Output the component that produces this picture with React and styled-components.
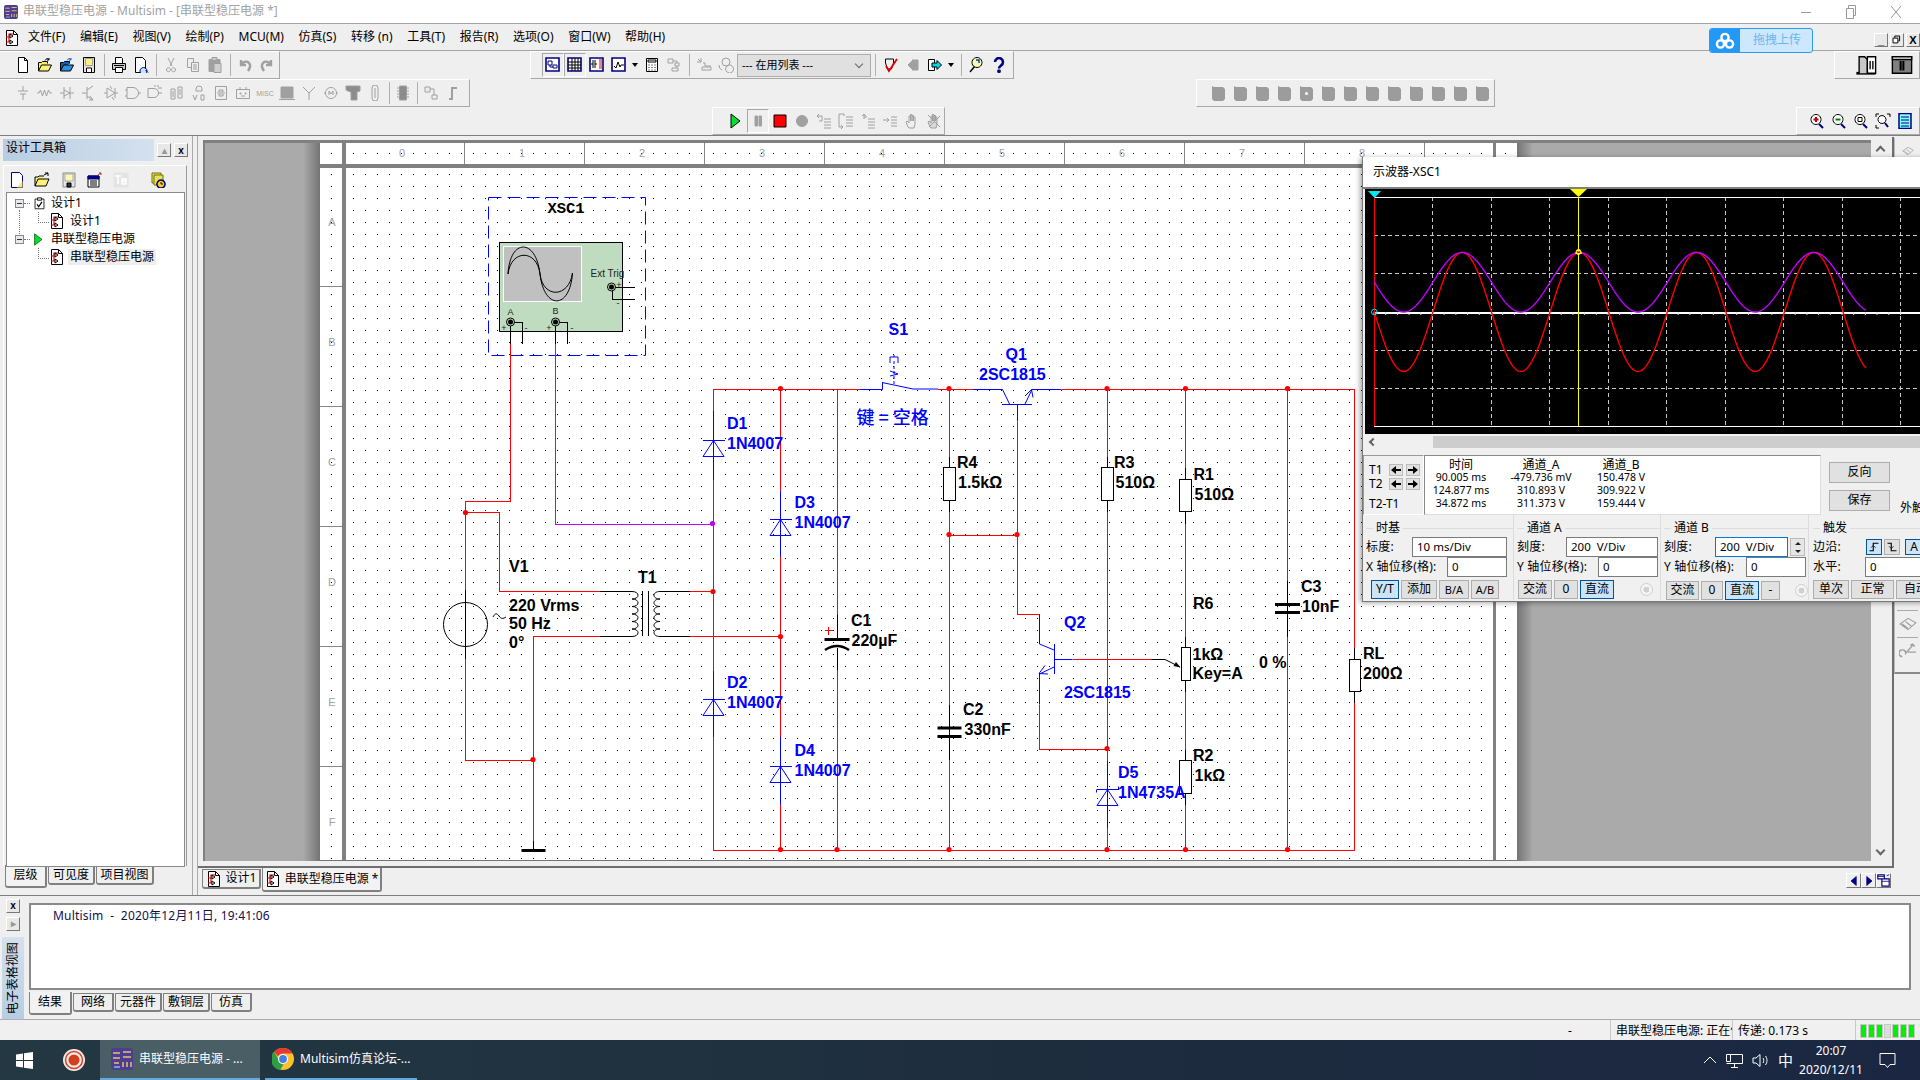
import React from "react"
import styled, { createGlobalStyle } from "styled-components"

const UI_FONT = '"Noto Sans", "Noto Sans CJK SC", sans-serif'

const Global = createGlobalStyle`
  html, body { margin: 0; padding: 0; background: #efefef; }
  * { box-sizing: border-box; }
`

const Root = styled.div`
  position: relative;
  width: 1920px;
  height: 1080px;
  overflow: hidden;
  display: flex;
  flex-direction: column;
  background: #efefef;
  color: #000;
  font: 12px/1.2 ${UI_FONT};
`

/* ---------- title + menu ---------- */
const TitleBar = styled.div`
  height: 24px;
  flex: none;
  display: flex;
  align-items: center;
  gap: 5px;
  padding-left: 4px;
  background: #fff;
  border-bottom: 1px solid #a4a4a4;
  color: #a2a2a2;
  white-space: pre;
`
const WinControls = styled.div`
  margin-left: auto;
  display: flex;
  color: #9a9a9a;
  margin-right: 2px;
`
const WinButton = styled.div`
  width: 45px;
  height: 22px;
  display: flex;
  align-items: center;
  justify-content: center;
`
const MenuBar = styled.div`
  height: 27px;
  flex: none;
  display: flex;
  align-items: center;
  padding: 1px 0 0 4px;
  border-bottom: 1px solid #a4a4a4;
`
const MenuItems = styled.div`
  display: flex;
  gap: 14.6px;
  margin-left: 8px;
  white-space: nowrap;
`
const MdiButtons = styled.div`
  margin-left: auto;
  margin-top: 5px;
  display: flex;
  gap: 2px;
`
const MdiButton = styled.div`
  width: 14px;
  height: 14px;
  display: flex;
  align-items: center;
  justify-content: center;
  background: #e8e8e8;
  border: 1px solid #fff;
  border-right-color: #777;
  border-bottom-color: #777;
  font: bold 11px/12px "Liberation Sans", sans-serif;
`
const UploadBadge = styled.div`
  position: absolute;
  left: 1709px;
  top: 28px;
  width: 104px;
  height: 25px;
  display: flex;
  align-items: center;
  background: #cde7fd;
  border: 1px solid #2a9bf5;
  border-radius: 3px;
  color: #6ab6ee;
  overflow: hidden;
`
const UploadLogo = styled.div`
  width: 30px;
  height: 100%;
  flex: none;
  display: flex;
  align-items: center;
  justify-content: center;
  background: #2299f6;
`
const UploadText = styled.span`
  margin-left: 13px;
`

/* ---------- toolbars ---------- */
const ToolArea = styled.div`
  height: 85px;
  flex: none;
  border-bottom: 1px solid #7e7e7e;
`
const ToolRow = styled.div`
  height: 28px;
  display: flex;
`
const Toolbar = styled.div`
  width: ${p => p.$w}px;
  margin-left: ${p => p.$ml || 0}px;
  padding-left: ${p => p.$pl || 0}px;
  height: 28px;
  display: flex;
  align-items: center;
  border-top: 1px solid #fff;
  border-right: 1px solid #a8a8a8;
  border-bottom: 1px solid #a8a8a8;
  border-left: ${p => (p.$ml || p.$edge ? "1px solid #fff" : "none")};
`
const ToolBtn = styled.div`
  width: ${p => p.$w || 22}px;
  height: 24px;
  flex: none;
  display: flex;
  align-items: center;
  justify-content: center;
  border: 1px solid ${p => (p.$on ? "#a8a8a8" : "transparent")};
  border-right-color: ${p => (p.$on ? "#fff" : "transparent")};
  border-bottom-color: ${p => (p.$on ? "#fff" : "transparent")};
`
const ToolSep = styled.div`
  width: ${p => p.$w || 8}px;
  height: 22px;
  flex: none;
  display: flex;
  justify-content: center;
  &::after {
    content: "";
    width: 1px;
    background: #b0b0b0;
  }
`
const DropCaret = styled.div`
  width: 0;
  height: 0;
  margin: 0 3px 0 2px;
  flex: none;
  border: 3px solid transparent;
  border-top: 4px solid #000;
  border-bottom: none;
`
const ListSelect = styled.div`
  width: 134px;
  height: 23px;
  flex: none;
  display: flex;
  align-items: center;
  justify-content: space-between;
  padding: 0 8px 0 4px;
  background: #e0e0e0;
  border: 1px solid #adadad;
  font-size: 11px;
`
const Chevron = styled.span`
  width: 6px;
  height: 6px;
  margin-top: -3px;
  border-right: 1px solid #666;
  border-bottom: 1px solid #666;
  transform: rotate(45deg);
`

/* ---------- body ---------- */
const Body = styled.div`
  height: 760px;
  flex: none;
  display: flex;
  border-bottom: 1px solid #7e7e7e;
`
const LeftPanel = styled.div`
  width: 193px;
  flex: none;
  margin-right: 4px;
  padding: 3px 0 0 3px;
  border-right: 1px solid #aaa;
`
const PanelHead = styled.div`
  height: 22px;
  display: flex;
  align-items: flex-start;
`
const PanelTitle = styled.div`
  width: 151px;
  height: 22px;
  padding: 2px 0 0 3px;
  background: linear-gradient(90deg, #b8cde2, #d4e1ef);
`
const SmallBtn = styled.div`
  width: 14px;
  height: 14px;
  margin: 4px 0 0 3px;
  display: flex;
  align-items: center;
  justify-content: center;
  background: #e8e8e8;
  border: 1px solid #fff;
  border-right-color: #777;
  border-bottom-color: #777;
  font: bold 10px "Liberation Sans", sans-serif;
  color: ${p => p.$c || "#000"};
`
const PanelBox = styled.div`
  width: 184px;
  height: 701px;
  margin-top: 4px;
  padding: 2px;
  border-top: 1px solid #fff;
  border-left: 1px solid #fff;
  border-right: 1px solid #9a9a9a;
`
const PanelTools = styled.div`
  height: 24px;
  display: flex;
  align-items: center;
`
const Tree = styled.div`
  position: relative;
  width: 179px;
  height: 675px;
  padding-top: 1px;
  background: #fff;
  border: 1px solid #8a8a8a;
  &::before {
    content: "";
    position: absolute;
    left: 12px;
    top: 17px;
    height: 34px;
    border-left: 1px dotted #777;
  }
`
const TreeRow = styled.div`
  position: relative;
  height: 18px;
  display: flex;
  align-items: center;
  padding-left: ${p => (p.$child ? 42 : 8)}px;
  gap: 5px;
  white-space: nowrap;
  ${p =>
    p.$child &&
    `&::before {
      content: "";
      position: absolute;
      left: 31px;
      top: 0;
      width: 10px;
      height: 10px;
      border-left: 1px dotted #777;
      border-bottom: 1px dotted #777;
    }`}
`
const Expander = styled.div`
  position: relative;
  width: 9px;
  height: 9px;
  margin-right: 4px;
  flex: none;
  display: flex;
  align-items: center;
  justify-content: center;
  background: #e8e8ee;
  border: 1px solid #888;
  &::before {
    content: "";
    width: 5px;
    height: 1px;
    background: #333;
  }
  &::after {
    content: "";
    position: absolute;
    left: 8px;
    top: 3px;
    width: 6px;
    border-top: 1px dotted #777;
  }
`
const TreeText = styled.span`
  padding: 1px ${p => (p.$sel ? 2 : 0)}px;
  margin-left: ${p => (p.$sel ? -2 : 0)}px;
  background: ${p => (p.$sel ? "#eeeeee" : "transparent")};
`
const TabRow = styled.div`
  height: ${p => p.$h || 20}px;
  display: flex;
  align-items: flex-start;
  gap: ${p => p.$gap || 2}px;
  margin-left: ${p => p.$ml || 0}px;
  margin-top: ${p => p.$mt || 0}px;
`
const Tab = styled.div`
  width: ${p => p.$w}px;
  height: ${p => (p.$active ? (p.$th || 19) + 4 : p.$th || 19)}px;
  margin-top: ${p => (p.$active ? -1 : 0)}px;
  display: flex;
  align-items: center;
  justify-content: center;
  gap: 4px;
  white-space: pre;
  border: 1px solid #808080;
  border-top: ${p => (p.$active ? "none" : "1px solid #808080")};
  border-right-width: 2px;
  border-bottom-width: 2px;
  border-radius: 0 0 3px 3px;
  background: ${p => (p.$active ? "#f2f2f2" : "#efefef")};
`

const Center = styled.div`
  width: 1697px;
  flex: none;
  border-left: 1px solid #aaa;
`
const Frame = styled.div`
  height: 731px;
  margin-top: 1px;
  padding: 3px 3px 5px 5px;
  display: flex;
  border-right: 2px solid #6e6e6e;
  border-bottom: 2px solid #6e6e6e;
`
const Canvas = styled.div`
  flex: 1;
  min-width: 0;
  display: flex;
  overflow: hidden;
  border-top: 3px solid #808080;
  border-left: 2px solid #808080;
  background: linear-gradient(
    90deg,
    #aaa 0,
    #aaa 98px,
    #747474 115px,
    #747474 1312px,
    #aaa 1328px
  );
`
const Sheet = styled.svg`
  flex: none;
  margin-left: 115px;
  background: #fff;
  display: block;
`
const VScroll = styled.div`
  width: 18px;
  flex: none;
  display: flex;
  flex-direction: column;
  justify-content: space-between;
  align-items: center;
  padding: 4px 0;
  background: #efefef;
  color: #666;
  font: bold 12px "Liberation Sans", sans-serif;
`
const VArrow = styled.span`
  width: 7px;
  height: 7px;
  margin: 3px 0;
  border-left: 2px solid #666;
  border-top: 2px solid #666;
  transform: rotate(${p => (p.$down ? 225 : 45)}deg);
`
const NavButtons = styled.div`
  margin: 4px 3px 0 auto;
  display: flex;
`
const NavBtn = styled.div`
  width: 15px;
  height: 15px;
  display: flex;
  align-items: center;
  justify-content: center;
  background: #efefef;
  border: 1px solid #fff;
  border-right-color: #777;
  border-bottom-color: #777;
`
const Strip = styled.div`
  width: 26px;
  flex: none;
`
const StripTop = styled.div`
  height: 26px;
  margin-top: 2px;
  display: flex;
  justify-content: center;
  align-items: center;
  border-left: 1px solid #bbb;
`
const StripBox = styled.div`
  margin-top: 438px;
  height: 72px;
  display: flex;
  flex-direction: column;
  align-items: center;
  padding-top: 4px;
  border-bottom: 2px solid #8a8a8a;
  border-left: 1px solid #bbb;
`
const StripRule = styled.div`
  width: 21px;
  height: 1px;
  margin: 4px 0;
  background: #aaa;
`

/* ---------- bottom panel ---------- */
const Bottom = styled.div`
  height: 124px;
  flex: none;
  display: flex;
  border-bottom: 1px solid #aaa;
`
const SideRail = styled.div`
  width: 29px;
  flex: none;
  padding: 3px 0 0 2px;
  display: flex;
  flex-direction: column;
`
const RailBtn = styled(SmallBtn)`
  margin: 0 0 4px 4px;
`
const RailTitle = styled.div`
  width: 22px;
  height: 83px;
  margin-top: 2px;
  display: flex;
  align-items: center;
  justify-content: center;
  background: linear-gradient(0deg, #d4e1ef, #b8cde2);
  writing-mode: vertical-rl;
  text-orientation: sideways;
  transform: rotate(180deg);
  white-space: nowrap;
`
const ResultArea = styled.div`
  flex: 1;
`
const ResultBox = styled.div`
  width: 1882px;
  height: 87px;
  margin-top: 7px;
  padding: 4px 0 0 22px;
  background: #fff;
  border: 2px solid #8a8a8a;
  white-space: pre;
  color: #10104a;
  letter-spacing: 0.2px;
`
const StatusBar = styled.div`
  height: 20px;
  flex: none;
  display: flex;
  justify-content: flex-end;
  align-items: stretch;
  background: #f0f0f0;
`
const StatusCell = styled.div`
  width: ${p => p.$w}px;
  display: flex;
  align-items: center;
  justify-content: ${p => (p.$center ? "center" : "flex-start")};
  padding: 2px 0 0 ${p => (p.$center ? 0 : 5)}px;
  overflow: hidden;
  white-space: pre;
  border-left: ${p => (p.$center ? "none" : "1px solid #c8c8c8")};
`
const Meter = styled.div`
  display: flex;
  gap: 3px;
`
const MeterBar = styled.div`
  width: 5px;
  height: 12px;
  background: ${p => (p.$off ? "#dcdcdc" : "#00f000")};
  outline: 1px solid #c8c8c8;
`

/* ---------- taskbar ---------- */
const Taskbar = styled.div`
  height: 40px;
  flex: none;
  display: flex;
  align-items: stretch;
  background: linear-gradient(90deg, #233842, #1d2c3e 60%, #1b2742);
  color: #fff;
`
const TaskIcon = styled.div`
  width: ${p => p.$w}px;
  flex: none;
  display: flex;
  align-items: center;
  justify-content: center;
`
const TaskItem = styled.div`
  width: ${p => p.$w}px;
  margin-right: ${p => p.$mr || 0}px;
  flex: none;
  display: flex;
  align-items: center;
  gap: 6px;
  padding-left: ${p => p.$pl}px;
  background: ${p => (p.$on ? "#4a5e66" : "transparent")};
  border-bottom: 2px solid #63a9dc;
  white-space: nowrap;
`
const Tray = styled.div`
  margin-left: auto;
  display: flex;
  align-items: center;
  gap: 9px;
`
const ImeText = styled.span`
  font-size: 15px;
`
const Clock = styled.div`
  width: 74px;
  margin-left: -8px;
  text-align: center;
  line-height: 19px;
`
const Notice = styled.div`
  width: 38px;
  margin-right: 14px;
  display: flex;
  justify-content: center;
`

/* ---------- oscilloscope window ---------- */
const Scope = styled.div`
  position: absolute;
  left: 1362px;
  top: 157px;
  width: 570px;
  height: 445px;
  overflow: hidden;
  background: #f0f0f0;
  border-left: 1px solid #777;
  border-bottom: 1px solid #777;
  box-shadow: -2px 1px 5px rgba(0, 0, 0, 0.35);
`
const ScopeTitle = styled.div`
  height: 32px;
  padding: 8px 0 0 10px;
  background: #fff;
  border-bottom: 2px solid #808080;
`
const ScopeScreen = styled.svg`
  display: block;
  margin-left: 2px;
  background: #000;
`
const HScroll = styled.div`
  height: 15px;
  margin-top: 2px;
  display: flex;
  align-items: center;
  padding-left: 4px;
  background: linear-gradient(90deg, #f0f0f0 70px, #cdcdcd 70px);
  background-size: 100% 12px;
  background-repeat: no-repeat;
  background-position: top;
`
const HArrow = styled.span`
  width: 6px;
  height: 6px;
  margin: -3px 0 0 3px;
  border-left: 2px solid #666;
  border-bottom: 2px solid #666;
  transform: rotate(45deg);
`
const ReadRow = styled.div`
  height: 60px;
  margin-top: 4px;
  display: flex;
`
const CursorBox = styled.div`
  width: 61px;
  flex: none;
  padding: 7px 0 0 5px;
  border: 1px solid #9a9a9a;
  border-right-color: #fff;
  border-bottom-color: #fff;
`
const CursorRow = styled.div`
  height: 14px;
  display: flex;
  align-items: center;
`
const CursorTail = styled.div`
  margin-top: 6px;
`
const CursorName = styled.span`
  width: 20px;
`
const ArrowBtn = styled.div`
  width: 14px;
  height: 12px;
  margin-right: 3px;
  display: flex;
  align-items: center;
  justify-content: center;
  background: #e1e1e1;
  border: 1px solid #bbb;
`
const Readout = styled.div`
  width: 397px;
  flex: none;
  display: grid;
  grid-template-columns: 72px 88px 72px;
  grid-auto-rows: 13px;
  align-content: start;
  justify-items: center;
  padding-top: 2px;
  background: #fff;
  border: 1px solid #8a8a8a;
  border-right-color: #ddd;
  border-bottom-color: #ddd;
  font-size: 10.5px;
  line-height: 13px;
  white-space: pre;
`
const ReadHead = styled.span`
  font-size: 12px;
  line-height: 13px;
`
const SideCol = styled.div`
  margin-left: 8px;
  padding-top: 7px;
  width: 61px;
  flex: none;
  display: flex;
  flex-direction: column;
  gap: 7px;
`
const ExtLabel = styled.span`
  margin: 46px 0 0 10px;
  white-space: nowrap;
`
const Groups = styled.div`
  display: flex;
`
const Group = styled.div`
  width: ${p => p.$w}px;
  flex: none;
  padding: 5px 0 0 ${p => p.$pl || 3}px;
  border-left: ${p => (p.$first ? "none" : "1px solid #dcdcdc")};
`
const Legend = styled.div`
  height: 16px;
  margin-bottom: 1px;
  padding-left: 7px;
  line-height: 16px;
  background: linear-gradient(#dcdcdc, #dcdcdc) center / 100% 1px no-repeat;
`
const LegendText = styled.span`
  padding: 0 3px;
  background: #f0f0f0;
`
const Field = styled.div`
  height: 20px;
  display: flex;
  align-items: center;
  white-space: pre;
`
const FieldLabel = styled.span`
  width: ${p => p.$w}px;
  flex: none;
  letter-spacing: 0.2px;
`
const Input = styled.div`
  width: ${p => p.$w}px;
  height: 20px;
  flex: none;
  padding: 0 0 0 4px;
  background: #fff;
  border: 1px solid ${p => (p.$focus ? "#0078d7" : "#7a7a7a")};
  line-height: 18px;
  white-space: pre;
  font-size: 11.5px;
`
const Spinner = styled.div`
  width: 15px;
  height: 18px;
  margin-left: 2px;
  display: flex;
  flex-direction: column;
  align-items: center;
  justify-content: space-around;
  background: #e6e6e6;
  border: 1px solid #bbb;
`
const SpinTri = styled.span`
  width: 0;
  height: 0;
  border: 3px solid transparent;
  ${p => (p.$down ? "border-top: 3px solid #222; border-bottom: none;" : "border-bottom: 3px solid #222; border-top: none;")}
`
const BtnRow = styled.div`
  display: flex;
  gap: 2px;
  align-items: center;
  padding-left: ${p => p.$pl || 0}px;
  margin-top: ${p => p.$mt || 3}px;
`
const Btn = styled.div`
  width: ${p => p.$w}px;
  height: ${p => p.$h || 19}px;
  margin-left: ${p => p.$ml || 0}px;
  flex: none;
  display: flex;
  align-items: center;
  justify-content: center;
  background: ${p => (p.$on ? "#cce4f7" : "#e1e1e1")};
  border: 1px solid ${p => (p.$on ? "#005499" : "#adadad")};
  white-space: nowrap;
  font-size: ${p => p.$fs || 12}px;
`
const Radio = styled.div`
  width: 13px;
  height: 13px;
  margin-left: ${p => p.$ml}px;
  flex: none;
  border-radius: 50%;
  background: radial-gradient(circle, #d0d0d0 0 3px, #f4f4f4 3px);
  border: 1px solid #cfcfcf;
`

/* ---------- schematic text ---------- */
const PartText = styled.text`
  font: bold 16px "Liberation Sans", sans-serif;
  fill: ${p => p.$c || "#000"};
`
const KeyText = styled.text`
  font: 500 18px "Noto Sans CJK SC", sans-serif;
  fill: #0000ff;
`
const RulerText = styled.text`
  font: 11px "Liberation Sans", sans-serif;
  fill: #a0a0a0;
  text-anchor: middle;
`
const SmallText = styled.text`
  font: ${p => p.$s || 9}px "Liberation Sans", sans-serif;
  fill: ${p => p.$c || "#222"};
  text-anchor: ${p => p.$a || "start"};
`
const InstrText = styled.text`
  font: bold 15.5px "Liberation Mono", monospace;
  fill: #000;
  text-anchor: middle;
`

/* ---------- icons ---------- */
const G = "#a0a0a0"
const N = "#000080"
const K = "#000"

const ICONS = {
  new: [["M3.5 .5h6l3 3v12h-9z", "#fff", K], ["M9.5 .5v3h3", "none", K]],
  open: [["M1.5 14V5.5h3l1-1h5v2", "#ffe95c", K], ["M1.5 14l3-6h10l-3 6z", "#fff27a", K], ["M8 3.5c1-2 3-2.5 4-1M12 1v2h-2", "none", K]],
  openBlue: [["M1.5 14V5.5h3l1-1h5v2", "#0d5fb4", K], ["M1.5 14l3-6h10l-3 6z", "#2f8fe0", K], ["M8 3.5c1-2 3-2.5 4-1M12 1v2h-2", "none", "#1060c0"]],
  save: [["M2.5 .5h11v15h-11z", "#e4e4e4", K], ["M4.5 1.5h7v7h-7z", "#fff27a", G], ["M5.5 11h5v4.5h-5z", "#fff", K]],
  print: [["M4.5 .5h6l1 1v5h-7z", "#fff", K], ["M1.5 6.5h13v6h-13z", "#c8c8c8", K], ["M4.5 10.5h7v5h-7z", "#fff", K], ["M3 8.5h10", "none", K]],
  preview: [["M2.5 .5h7l3 3v12h-10z", "#fff", K], ["M10.5 10.5a3.5 3.5 0 1 1-.01 0z", "#bfe6ff", N], ["M12.5 13l2.5 2.5", "none", N]],
  cut: [["M5 1l4 8M11 1l-4 8M6.5 11a2 2 0 1 1-3 2 2 2 0 0 1 3-2zM12.5 13a2 2 0 1 1-3-2 2 2 0 0 1 3 2z", "none", G]],
  copy: [["M2.5 1.5h6v9h-6z", "#efefef", G], ["M6.5 5.5h7v9h-7z", "#efefef", G], ["M8 8h4M8 10h4M8 12h4", "none", G]],
  paste: [["M2 2.5h11v12h-11z", G, G], ["M5 .5h5v3h-5z", "#c8c8c8", G], ["M7 6.5h7v9h-7z", "#d0d0d0", G]],
  undo: [["M4 3v5h5M4 8c3-5 8-4 9 0 .5 2-.5 4-2 6", "none", G, 2.4]],
  redo: [["M12 3v5H7M12 8C9 3 4 4 3 8c-.5 2 .5 4 2 6", "none", G, 2.4]],

  srcG: [["M8 1v5M3 6h10M5 9h6M8 9v6", "none", G]],
  resG: [["M0 8h2l1.5-3 2 6 2-6 2 6 2-6 1.5 3h2", "none", G]],
  capG: [["M5 2v12M11 2v12M1 8h4M11 8h4M5 5l6 3-6 3", "none", G]],
  bjtG: [["M6 2v12M1 8h5M6 5l6-4M6 11l6 4M9 11l3 4-4 0", "none", G]],
  diodeG: [["M1 8h3M12 8h3M4 3v10l8-5zM12 3v10M7 1l2 3M9 12l2 3", "none", G]],
  gateA: [["M2 2.5h6a5.5 5.5 0 0 1 0 11H2zM0 5h2M0 11h2M13.5 8H16", "none", G]],
  gateB: [["M1 3.5h6a4.5 4.5 0 0 1 0 9H1zM7 1h2M10 1h2M11 3h4M11.5 8H15", "none", G]],
  adcG: [["M2 4h4v10H2zM9 2h4v11H9zM4 6v6M11 4v6", "none", G]],
  ovG: [["M8 1a3 3 0 0 1 3 3v2H5V4a3 3 0 0 1 3-3zM2 10l2 5 2-5M10 10h3v5h-3z", "none", G]],
  chipG: [["M2.5 1.5h11v13h-11zM6 5h4v2H6zM6 9h4v2H6zM5 7v2M11 7v2", "none", G]],
  robotG: [["M1.5 4.5h13v9h-13zM5 2v2M11 2v2", "none", G], ["M5 8h1v1H5zM10 8h1v1h-1zM6 11h4", "none", G]],
  blockG: [["M2 2h12v11H2z", G, G], ["M0 14.5h16", "none", G]],
  antG: [["M2 2l6 6 6-6M8 8v7", "none", G]],
  motorG: [["M8 2.5a5.5 5.5 0 1 1-.01 0zM1 8h1.5M13.5 8H15M6 10V6l2 3 2-3v4", "none", G]],
  tG: [["M1 1h14v5l-3 1v8H6V7L3 6 1 5z", "#8c8c8c", G]],
  ovalG: [["M5 3a3 3 0 0 1 6 0v10a3 3 0 0 1-6 0zM8 3v10", "none", G]],
  mcuG: [["M4.5 1h7v14h-7z", "#8c8c8c", G], ["M2 3h3M2 6h3M2 9h3M2 12h3M11 3h3M11 6h3M11 9h3M11 12h3", "none", G]],
  busG: [["M2 2h5v5H2zM9 10h5v4H9zM7 4h4v6", "none", G]],
  stepG: [["M4 14h3V3h5", "none", G, 2]],

  boxA: [["M1 1h13v13H1z", "#fff", N, 1.6], ["M3 4h4v4H3zM8 8h4v3H8zM5 8v2h3", "none", N]],
  boxB: [["M1 1h13v13H1z", "#fff", N, 1.6], ["M1 5h13M1 8h13M1 11h13M5 1v13M8 1v13M11 1v13", "none", K]],
  boxC: [["M1 1h13v13H1z", "#fff", N, 1.6], ["M4 3v8M6 3v8M2 7h2M6 7h2", "none", K], ["M10 3h3M10 5h3M10 7h3M10 9h3M10 11h3", "none", "#e00000"]],
  boxD: [["M1 1h13v13H1z", "#fff", N, 1.6], ["M3 9l2 2 2-6 2 5 1-2h3", "none", K]],
  calc: [["M2.5 1.5h11v13h-11z", "#fff", K], ["M4 3h8v2H4z", "none", K], ["M4.5 8h1M7.5 8h1M10.5 8h1M4.5 10.5h1M7.5 10.5h1M10.5 10.5h1M4.5 13h1M7.5 13h1M10.5 13h1", "none", K]],
  netG: [["M2 2h5v4H2zM9 6h4v3H9zM6 11h6v3H6zM7 4h4v2M11 9v2", "none", G]],
  pinG: [["M2 2l3 3M5 1v4M1 5h4M7 6h2v3H15M6 10h9v3H6z", "none", G]],
  globeG: [["M4 5a4 4 0 1 1 8 0 4 4 0 0 1-8 0zM1 8a5 5 0 0 0 3 5M9 9a4 4 0 1 1 0 6 4 4 0 0 1 0-6z", "none", G]],
  check: [["M2.5 2h8v4l-2 6h-4l-2-6z", "none", K], ["M3 9l3 5 8-12", "none", "#e00000", 1.8]],
  backG: [["M3 8l4-4v8zM7 3h6v10H7", G, G]],
  forward: [["M1.5 2.5h6v11h-6z", "#fff", K], ["M5 6h5V3.5l4.5 4.5-4.5 4.5V10H5z", "#00d8e8", K]],
  search: [["M8 .5a5 5 0 1 1-.01 0z", "#fff8b0", K], ["M5.5 9.5L1 15", "none", K, 1.5], ["M7 3h3v3", "none", "#0040c0", 1.5]],
  helpQ: [["M4 5a4 4 0 1 1 6 3.5C8.5 9.5 8 10 8 11.5", "none", N, 2.6], ["M6.8 13h2.4v2.4H6.8z", N, N]],
  play: [["M3 1v14l9-7z", "#00e030", K]],
  pause: [["M5 3h2.5v10H5zM9 3h2.5v10H9z", G, G]],
  stop: [["M2 2h12v12H2z", "#ff0000", K]],
  record: [["M8 2.5a5.5 5.5 0 1 1-.01 0z", G, G]],
  stepA: [["M1 3h5M1 3l2-2M1 3l2 2M6 3v5H3M8 6h7M8 9h7M8 12h7M8 15h7", "none", G]],
  stepB: [["M1 1h5v2M1 1v13h4M5 14l-2-2M5 14l-2 2M8 4h7M8 7h7M8 10h7M8 13h7", "none", G]],
  stepC: [["M4 6V1M4 1L2 3M4 1l2 2M4 4h3M8 6h7M8 9h7M8 12h7M8 15h7", "none", G]],
  stepD: [["M1 7h6M7 7L5 5M7 7L5 9M9 4h6M9 7h6M9 10h6M9 13h6", "none", G]],
  hand: [["M4 14L2 9l1-1 2 2V3h1.5v5V1.5H8V8V2.5h1.5V8V4H11v7l-1 4H5z", "#efefef", G]],
  handX: [["M4 14L2 9l1-1 2 2V3h1.5v5V1.5H8V8V2.5h1.5V8V4H11v7l-1 4H5z", "#d8d8d8", G], ["M2 2l12 12M3 14L14 3", "none", G]],
  zoomIn: [["M7 1.5a5 5 0 1 1-.01 0z", "#fff", K], ["M10 11l4 4", "none", N, 2], ["M4.5 6.5h5M7 4v5", "none", "#c00000", 2]],
  zoomOut: [["M7 1.5a5 5 0 1 1-.01 0z", "#fff", K], ["M10 11l4 4", "none", N, 2], ["M4.5 6.5h5", "none", "#008000", 2]],
  zoomArea: [["M7 1.5a5 5 0 1 1-.01 0z", "#fff", K], ["M10 11l4 4", "none", N, 2], ["M5 4.5h4v4H5z", "none", K]],
  zoomFit: [["M7 2.5a4 4 0 1 1-.01 0z", "#fff", K], ["M10 10l3 4", "none", N, 2], ["M1 4V1h3M12 1h3v3M1 12v3h3", "none", K]],
  sheet: [["M2 .5h12v15H2z", "#80ffff", N, 1.5], ["M4 4h8M4 7h8M4 10h8M4 13h8", "none", N]],

  stem: [["M1 14h14", "none", K, 2], ["M3 14V2h4l2 2v10", "#c8c8c8", K], ["M9 2h6v12H9z", "#fff", K], ["M11 5v6M13 5v6", "none", K]],
  stemB: [["M1 2h14v12H1z", "#808080", K], ["M1 2h14v2H1z", "#fff", K], ["M7 5v7M9 5v7", "none", K, 1.5]],

  lNew: [["M2.5 .5h8l3 3v12h-11z", "#fff", N], ["M13.5 9L8 15.5h5.5z", "#ffe95c", "none"]],
  lOpen: [["M1 14l3-7h11l-3 7zM1 14V5h3l1-1h5", "#fff27a", K], ["M10 3l4-2M14 1h-3M14 1v3", "none", K]],
  lSave: [["M2 1h12v14H2z", "#e4e4e4", "#8a8a8a"], ["M4 2h8v7H4z", "#fff8b0", "#aaa"], ["M6 11h4v4H6z", "#333", K]],
  lWin: [["M1 4h11v11H1z", "#fff", K], ["M1 4h11v3H1z", N, N], ["M3 9h7M3 11h7M3 13h7", "none", K], ["M11 3l3-2M14 1h-2M14 1v2", "none", "#c03020"]],
  lTe: [["M1 1h14v14H1z", "#e4e4e4", "#e4e4e4"], ["M2 4h6M5 4v8M9 9h4M9 7h4v5H9z", "none", "#fff", 1.5]],
  lClock: [["M1 1h9v10H1z", "#e8e060", "#707000"], ["M3 3h9v10H3z", "#e8e060", "#707000"], ["M10 8a4 4 0 1 1-.01 0z", "#ffd000", N, 1.5], ["M10 10v2h2", "none", N]],
  doc: [["M2.5 .5h7l4 4v11h-11z", "#fff", K], ["M9.5 .5v4h4", "none", K], ["M2 7h3v-3h4M5 7v5h4M2 12h3", "none", "#e00000", 1.2], ["M6 4l3 2-3 2zM6 10l3 2-3 2z", "#fff", K]],
  clip: [["M2.5 2.5h11v12h-11z", "#fff", K], ["M5.5 1h5v3h-5z", "#e4e4e4", K], ["M5 9l2 3 4-6", "none", K, 1.5]],
  design: [["M2 1v14l9-7z", "#00e030", "#006000"]],
  stripA: [["M1 8l7-5 7 4-7 6zM3 8l5 4M6 6l5 4", "none", G]],
  stripB: [["M3 13a3 3 0 1 1 3-3l6-7M8 9h7M10 3l2-1 2 2", "none", G, 1.3]],
  navL: [["M11 2v12L4 8z", N, N]],
  navR: [["M5 2v12l7-6z", N, N]],
  navW: [["M1 1h8v5H1zM6 6h9v9H6z", "#fff", N, 1.4], ["M1 3h8M6 9h9M12 2l3-1", "none", N]],
  edgeUp: [["M2 13h5V3h7", "none", K, 1.5], ["M4 9l3-3 3 3", "none", K]],
  edgeDown: [["M2 3h5v10h7", "none", K, 1.5], ["M4 7l3 3 3-3", "none", K]],
  restore: [["M1.5 4.5h7v7h-7z", "#fff", K, 1.4], ["M4 4V1.5h7v7H9", "none", K, 1.4]],
}

const Ico = ({ name, size = 16 }) => (
  <svg width={size} height={size} viewBox="0 0 16 16">
    {ICONS[name].map(([d, fill, stroke, sw], i) => (
      <path key={i} d={d} fill={fill} stroke={stroke} strokeWidth={sw || 1} />
    ))}
  </svg>
)
const Tool = ({ name, w, on }) => (
  <ToolBtn $w={w} $on={on}>
    <Ico name={name} />
  </ToolBtn>
)
const MiscTool = () => (
  <ToolBtn>
    <svg width="18" height="16" viewBox="0 0 18 16">
      <SmallText x="9" y="11" $s={7} $c={G} $a="middle">MISC</SmallText>
    </svg>
  </ToolBtn>
)

/* ---------- schematic data, in page pixels ---------- */
const RED = "#ff0000"
const BLUE = "#0000ff"
const PURPLE = "#c000ff"

const redWires = [
  "510.5,344 510.5,501.5 465.5,501.5 465.5,590",
  "465.5,512.5 499.5,512.5 499.5,591.5 600,591.5",
  "465.5,659 465.5,760.5 533.5,760.5",
  "533.5,841 533.5,636.5 600,636.5",
  "690,591.5 713.5,591.5",
  "690,636.5 780.5,636.5",
  "713.5,410.5 713.5,389.5 860,389.5",
  "713.5,480 713.5,670.5",
  "713.5,736.5 713.5,850.5 1354.5,850.5 1354.5,703",
  "780.5,389.5 780.5,490.5",
  "780.5,556.5 780.5,736.5",
  "780.5,805 780.5,850.5",
  "837.5,389.5 837.5,615",
  "837.5,670 837.5,850.5",
  "938,389.5 973.5,389.5",
  "1061.5,389.5 1354.5,389.5 1354.5,647.5",
  "949.5,389.5 949.5,456.5",
  "949.5,511.5 949.5,704.5",
  "949.5,760 949.5,850.5",
  "949.5,535.5 1017.5,535.5",
  "1017.5,421.5 1017.5,614.5 1039.5,614.5",
  "1039.5,704.5 1039.5,749.5 1107.5,749.5",
  "1072.5,659.5 1151.5,659.5",
  "1107.5,389.5 1107.5,456.5",
  "1107.5,511.5 1107.5,760.5",
  "1107.5,827.5 1107.5,850.5",
  "1185.5,389.5 1185.5,467.5",
  "1185.5,523.5 1185.5,636.5",
  "1185.5,691.5 1185.5,749.5",
  "1185.5,804.5 1185.5,850.5",
  "1287.5,389.5 1287.5,580.5",
  "1287.5,636.5 1287.5,850.5",
]
const blackWires = [
  "465.5,590 465.5,659",
  "600,591.5 632,591.5",
  "600,636.5 632,636.5",
  "660,591.5 690,591.5",
  "660,636.5 690,636.5",
  "533.5,841 533.5,850",
  "837.5,615 837.5,640",
  "837.5,648 837.5,670",
  "949.5,704.5 949.5,760",
  "1287.5,580.5 1287.5,636.5",
]
const junctions = [
  [465.5, 512.5], [533, 759.5], [713, 591.5], [780.5, 636.5], [780.5, 388.5],
  [949, 388.5], [1107, 388.5], [1185.5, 388.5], [1287.5, 388.5], [949, 534.5],
  [1017, 534.5], [1107, 748.5], [780.5, 849.5], [837, 849.5], [949, 849.5],
  [1107, 849.5], [1185.5, 849.5], [1287.5, 849.5],
]
const diodes = [
  { x: 713.5, bar: 440.5, top: 410.5, end: 480 },
  { x: 713.5, bar: 699.5, top: 670.5, end: 736.5 },
  { x: 780.5, bar: 519.5, top: 490.5, end: 556.5 },
  { x: 780.5, bar: 766.5, top: 736.5, end: 805 },
  { x: 1107.5, bar: 789.5, top: 760.5, end: 827.5, zener: true },
]
const resistors = [
  { x: 949.5, top: 456.5, a: 467.5, b: 500.5, end: 511.5, hw: 6 },
  { x: 1107.5, top: 456.5, a: 467.5, b: 500.5, end: 511.5, hw: 6 },
  { x: 1185.5, top: 467.5, a: 479.5, b: 511.5, end: 523.5, hw: 6 },
  { x: 1185.5, top: 636.5, a: 647.5, b: 680.5, end: 691.5, hw: 4.5 },
  { x: 1185.5, top: 749.5, a: 760.5, b: 793.5, end: 804.5, hw: 6 },
  { x: 1354.5, top: 647.5, a: 659.5, b: 691.5, end: 703, hw: 5.5 },
]
const labels = [
  ["D1", 727, 429, BLUE], ["1N4007", 727, 449, BLUE],
  ["D3", 794.5, 507.5, BLUE], ["1N4007", 794.5, 527.5, BLUE],
  ["D2", 727, 688, BLUE], ["1N4007", 727, 708, BLUE],
  ["D4", 794.5, 755.5, BLUE], ["1N4007", 794.5, 775.5, BLUE],
  ["D5", 1118, 778, BLUE], ["1N4735A", 1118, 798, BLUE],
  ["S1", 888.5, 335, BLUE], ["Q1", 1005.5, 360, BLUE], ["2SC1815", 979, 379.5, BLUE],
  ["Q2", 1064, 627.5, BLUE], ["2SC1815", 1064, 697.5, BLUE],
  ["V1", 509, 571.5], ["T1", 638, 583], ["220 Vrms", 509, 610.5], ["50 Hz", 509, 629], ["0°", 509, 648],
  ["C1", 851, 625.5], ["220µF", 851.5, 646],
  ["R4", 957, 468], ["1.5kΩ", 958, 488],
  ["R3", 1114, 468], ["510Ω", 1115.5, 488],
  ["R1", 1193.5, 480], ["510Ω", 1194.5, 499.5],
  ["R6", 1193, 609], ["1kΩ", 1192.5, 660], ["Key=A", 1192.5, 678.5], ["0 %", 1259, 668],
  ["C3", 1301, 591.5], ["10nF", 1302, 611.5],
  ["C2", 963, 715], ["330nF", 964.5, 735],
  ["R2", 1193, 760.5], ["1kΩ", 1194.5, 780.5],
  ["RL", 1363, 659], ["200Ω", 1363, 679],
]
const rulerCols = [0, 1, 2, 3, 4, 5, 6, 7, 8]
const rulerRows = ["A", "B", "C", "D", "E", "F"]

const coil = (x, dir) => {
  let d = `M${x} 591.5`
  for (let i = 0; i < 6; i++) d += `c${8 * dir} 0 ${8 * dir} 7.5 0 7.5`
  return d
}

const Dots = ({ id, x, y }) => (
  <pattern id={id} x={x} y={y} width="12" height="12" patternUnits="userSpaceOnUse">
    <rect width="1" height="1" fill="#000" />
  </pattern>
)

const Schematic = () => (
  <Sheet width="1197" height="717" viewBox="320 143 1197 717">
    <defs>
      <Dots id="dMain" x="353" y="174" />
      <Dots id="dTop" x="353" y="153" />
      <Dots id="dLeft" x="331" y="174" />
    </defs>
    <rect x="346" y="168" width="1171" height="692" fill="url(#dMain)" />
    <rect x="346" y="143" width="1171" height="21" fill="url(#dTop)" />
    <rect x="320" y="168" width="22" height="692" fill="url(#dLeft)" />
    <rect x="331" y="153" width="1" height="1" fill="#000" />

    <g shapeRendering="crispEdges">
      <rect x="320" y="164" width="1197" height="4" fill="#808080" />
      <rect x="342" y="143" width="4" height="717" fill="#808080" />
      <rect x="1493" y="143" width="3" height="717" fill="#808080" />
      {rulerCols.map(c => (
        <line key={c} x1={464.5 + c * 120} x2={464.5 + c * 120} y1="143" y2="164" stroke="#888" />
      ))}
      {rulerRows.map((r, i) => (
        <line key={r} x1="320" x2="342" y1={286.5 + i * 120} y2={286.5 + i * 120} stroke="#888" />
      ))}
    </g>
    {rulerCols.map(c => (
      <RulerText key={c} x={402 + c * 120} y="157">{c}</RulerText>
    ))}
    {rulerRows.map((r, i) => (
      <RulerText key={r} x="332" y={226 + i * 120}>{r}</RulerText>
    ))}

    {/* XSC1 */}
    <rect x="488.5" y="197.5" width="157" height="158" fill="none" stroke={BLUE} strokeDasharray="13 6" />
    <InstrText x="566" y="213">XSC1</InstrText>
    <rect x="499.5" y="242.5" width="123" height="89" fill="#c0dcc0" stroke="#000" />
    <rect x="503.5" y="246.5" width="78" height="55" fill="#c0c0c0" stroke="#fff" />
    <path d="M508 274C510 238 536 238 540 274S570 310 572.5 273" fill="none" stroke="#000" />
    <path d="M508 274C511 249 537 249 540 274S569 298 572.5 273" fill="none" stroke="#000" />
    <SmallText x="590.5" y="277" $s={10}>Ext Trig</SmallText>
    <SmallText x="510.5" y="315" $s={9} $a="middle">A</SmallText>
    <SmallText x="555.5" y="314" $s={9} $a="middle">B</SmallText>
    <SmallText x="504" y="331" $a="middle">+</SmallText>
    <SmallText x="526" y="331" $a="middle">-</SmallText>
    <SmallText x="549" y="331" $a="middle">+</SmallText>
    <SmallText x="572" y="331" $a="middle">-</SmallText>
    <SmallText x="619" y="288" $a="middle">+</SmallText>
    <SmallText x="618" y="306" $a="middle">-</SmallText>
    <g fill="none" stroke="#000" shapeRendering="crispEdges">
      <polyline points="510.5,322.5 522.5,322.5 522.5,344" />
      <polyline points="555.5,322.5 567.5,322.5 567.5,344" />
      <line x1="510.5" x2="510.5" y1="322" y2="344" />
      <line x1="555.5" x2="555.5" y1="322" y2="344" />
      <polyline points="635,287.5 612.5,287.5 612.5,299.5 635,299.5" />
    </g>
    {[[510.5, 322], [555.5, 322], [611.5, 287]].map(([x, y]) => (
      <g key={x}>
        <circle cx={x} cy={y} r="4" fill="#c0dcc0" stroke="#000" />
        <circle cx={x} cy={y} r="2.5" fill="#000" />
      </g>
    ))}

    {/* wires */}
    <g fill="none" shapeRendering="crispEdges">
      {redWires.map(p => <polyline key={p} points={p} stroke={RED} />)}
      <polyline points="555.5,344 555.5,524.5 712,524.5" stroke={PURPLE} />
      {blackWires.map(p => <polyline key={p} points={p} stroke="#000" />)}
    </g>
    <polyline points="1151.5,659.5 1165,659.5 1180,667" fill="none" stroke="#000" />
    <path d="M1180.5 667.5l-7-1.5 2.5-4z" fill="#000" />

    {junctions.map(([x, y]) => (
      <circle key={`${x}-${y}`} cx={x} cy={y} r="2.6" fill={RED} />
    ))}
    <circle cx="712.5" cy="523.5" r="2.6" fill={PURPLE} />

    {/* source, ground, transformer */}
    <circle cx="465.5" cy="624.5" r="22" fill="none" stroke="#000" />
    <path d="M493 617c2-4 4-4 6-1s4 3 7 1" fill="none" stroke="#000" />
    <rect x="521.5" y="849" width="24" height="3" fill="#000" />
    <path d={coil(632, 1)} fill="none" stroke="#000" />
    <path d={coil(660, -1)} fill="none" stroke="#000" />
    <path d="M642.5 591v45M648.5 591v45" stroke="#000" shapeRendering="crispEdges" />

    {/* caps */}
    <path d="M824.5 639.5h25" stroke="#000" strokeWidth="3" />
    <path d="M825 650Q837 642 849 650" fill="none" stroke="#000" strokeWidth="2.6" />
    <path d="M825 630.5h7.5M828.7 627v7.5" stroke={RED} shapeRendering="crispEdges" />
    <path d="M937.5 728h24M937.5 736.5h24M1275 604.5h25M1275 612.5h25" stroke="#000" strokeWidth="3" />

    {/* resistors */}
    {resistors.map(r => (
      <g key={`${r.x}-${r.a}`} shapeRendering="crispEdges">
        <path d={`M${r.x} ${r.top}V${r.a}M${r.x} ${r.b}V${r.end}`} stroke="#000" />
        <rect x={r.x - r.hw} y={r.a} width={r.hw * 2} height={r.b - r.a} fill="#fff" stroke="#000" />
      </g>
    ))}

    {/* diodes */}
    {diodes.map(d => (
      <g key={d.bar} fill="none" stroke={BLUE}>
        <path d={`M${d.x} ${d.top}V${d.end}`} shapeRendering="crispEdges" />
        <path d={`M${d.x - 11} ${d.bar}h22`} shapeRendering="crispEdges" />
        {d.zener && <path d={`M${d.x - 11} ${d.bar}v3M${d.x + 11} ${d.bar}v-3`} />}
        <path d={`M${d.x} ${d.bar}L${d.x - 10.5} ${d.bar + 16}H${d.x + 10.5}z`} />
      </g>
    ))}

    {/* S1, Q1, Q2 */}
    <g fill="none" stroke={BLUE}>
      <path d="M860 389.5h22.5v-7M882 382.5l31 6.5h25" />
      <path d="M894 384v-25" strokeDasharray="3 2" />
      <path d="M890 363v-6h8v6M894 357v-2" />
      <path d="M890 371l8 3-8 2" />
      <path d="M973.5 389.5h29l7 14.5M1002 404.5h30M1025 404l7-14.5h29.5" />
      <path d="M1025 396l6.5-6.5 1.5 8" />
      <path d="M1017.5 404.5v17" />
      <path d="M1039.5 614.5v29.5l14.5 6M1054.5 644v30M1054.5 659.5h18M1054 667l-14.5 7v30.5" />
      <path d="M1045 665.5l-6 8 9 .5" />
    </g>

    <KeyText x="856.5" y="424">键 = 空格</KeyText>
    {labels.map(([t, x, y, c]) => (
      <PartText key={`${t}-${x}-${y}`} x={x} y={y} $c={c}>{t}</PartText>
    ))}
  </Sheet>
)

/* ---------- scope trace ---------- */
const GX = [1432.5, 1491.5, 1549.5, 1608.5, 1666.5, 1725.5, 1783.5, 1842.5, 1900.5]
const GY = [236.5, 274.5, 351.5, 389.5]
const trace = (mid, amp) => {
  const pts = []
  for (let x = 1374; x <= 1866; x += 1) {
    pts.push(`${x},${(mid + amp * Math.sin((2 * Math.PI * (x - 1374.3)) / 117.2)).toFixed(1)}`)
  }
  return pts.join(" ")
}
const ScopeGraph = () => (
  <ScopeScreen width="566" height="245" viewBox="1365 190 566 245">
    <g stroke="#c8c8c8" strokeDasharray="4 3" shapeRendering="crispEdges">
      {GX.map(x => <line key={x} x1={x} x2={x} y1="198" y2="427" />)}
      {GY.map(y => <line key={y} x1="1374" x2="1931" y1={y} y2={y} />)}
    </g>
    <g stroke="#fff" shapeRendering="crispEdges">
      <line x1="1374" x2="1931" y1="198.5" y2="198.5" />
      <line x1="1374" x2="1931" y1="427.5" y2="427.5" />
      <line x1="1374" x2="1931" y1="313.5" y2="313.5" strokeWidth="2" />
    </g>
    {Array.from({ length: 46 }, (_, i) => (
      <line key={i} x1={1374 + i * 11.7} x2={1374 + i * 11.7} y1="313" y2="316" stroke="#ddd" />
    ))}
    <line x1="1374.5" x2="1374.5" y1="198" y2="427" stroke="#ff0000" />
    <line x1="1578.5" x2="1578.5" y1="198" y2="427" stroke="#ffff00" />
    <polyline points={trace(313, 59.5)} fill="none" stroke="#ff0000" strokeWidth="1.4" />
    <polyline points={trace(283.2, 29.8)} fill="none" stroke="#c000ff" strokeWidth="1.4" />
    <path d="M1368 192h13l-6.5 7z" fill="#00e8f0" />
    <path d="M1570 190h17l-8.5 8z" fill="#ffff00" />
    <circle cx="1374.3" cy="313" r="2.8" fill="none" stroke="#00e8f0" />
    <path d="M1578.5 250l3 4.5h-6z" fill="none" stroke="#ffff00" />
    <circle cx="1578.5" cy="253" r="2.5" fill="none" stroke="#ffff00" />
  </ScopeScreen>
)
const ArrowGlyph = ({ right }) => (
  <svg width="10" height="8" viewBox="0 0 10 8">
    <path d={right ? "M0 3h5V0l5 4-5 4V5H0z" : "M10 3H5V0L0 4l5 4V5h5z"} fill="#000" />
  </svg>
)

const readings = [
  ["90.005 ms", "-479.736 mV", "150.478 V"],
  ["124.877 ms", "310.893 V", "309.922 V"],
  ["34.872 ms", "311.373 V", "159.444 V"],
]

const ScopeWindow = () => (
  <Scope>
    <ScopeTitle>示波器-XSC1</ScopeTitle>
    <ScopeGraph />
    <HScroll><HArrow /></HScroll>
    <ReadRow>
      <CursorBox>
        <CursorRow>
          <CursorName>T1</CursorName>
          <ArrowBtn><ArrowGlyph /></ArrowBtn>
          <ArrowBtn><ArrowGlyph right /></ArrowBtn>
        </CursorRow>
        <CursorRow>
          <CursorName>T2</CursorName>
          <ArrowBtn><ArrowGlyph /></ArrowBtn>
          <ArrowBtn><ArrowGlyph right /></ArrowBtn>
        </CursorRow>
        <CursorTail>T2-T1</CursorTail>
      </CursorBox>
      <Readout>
        <ReadHead>时间</ReadHead>
        <ReadHead>通道_A</ReadHead>
        <ReadHead>通道_B</ReadHead>
        {readings.flat().map((v, i) => <span key={i}>{v}</span>)}
      </Readout>
      <SideCol>
        <Btn $w={61} $h={21}>反向</Btn>
        <Btn $w={61} $h={21}>保存</Btn>
      </SideCol>
      <ExtLabel>外触发</ExtLabel>
    </ReadRow>
    <Groups>
      <Group $w={150} $first>
        <Legend><LegendText>时基</LegendText></Legend>
        <Field><FieldLabel $w={46}>标度:</FieldLabel><Input $w={95}>10 ms/Div</Input></Field>
        <Field><FieldLabel $w={81}>X 轴位移(格):</FieldLabel><Input $w={60}>0</Input></Field>
        <BtnRow $pl={5}>
          <Btn $w={28} $on>Y/T</Btn>
          <Btn $w={36}>添加</Btn>
          <Btn $w={30} $fs={11}>B/A</Btn>
          <Btn $w={28} $fs={11}>A/B</Btn>
        </BtnRow>
      </Group>
      <Group $w={147}>
        <Legend><LegendText>通道 A</LegendText></Legend>
        <Field><FieldLabel $w={49}>刻度:</FieldLabel><Input $w={92}>200  V/Div</Input></Field>
        <Field><FieldLabel $w={81}>Y 轴位移(格):</FieldLabel><Input $w={60}>0</Input></Field>
        <BtnRow $pl={1}>
          <Btn $w={34}>交流</Btn>
          <Btn $w={24}>0</Btn>
          <Btn $w={34} $on>直流</Btn>
          <Radio $ml={24} />
        </BtnRow>
      </Group>
      <Group $w={148}>
        <Legend><LegendText>通道 B</LegendText></Legend>
        <Field><FieldLabel $w={51}>刻度:</FieldLabel><Input $w={73} $focus>200  V/Div</Input><Spinner><SpinTri /><SpinTri $down /></Spinner></Field>
        <Field><FieldLabel $w={82}>Y 轴位移(格):</FieldLabel><Input $w={60}>0</Input></Field>
        <BtnRow $pl={2} $mt={4}>
          <Btn $w={33}>交流</Btn>
          <Btn $w={22}>0</Btn>
          <Btn $w={34} $on>直流</Btn>
          <Btn $w={19}>-</Btn>
          <Radio $ml={13} />
        </BtnRow>
      </Group>
      <Group $w={120} $pl={4}>
        <Legend><LegendText>触发</LegendText></Legend>
        <Field>
          <FieldLabel $w={53}>边沿:</FieldLabel>
          <Btn $w={16} $h={16} $on><Ico name="edgeUp" size={12} /></Btn>
          <Btn $w={16} $h={16} $ml={2}><Ico name="edgeDown" size={12} /></Btn>
          <Btn $w={18} $h={16} $ml={5} $on>A</Btn>
        </Field>
        <Field><FieldLabel $w={52}>水平:</FieldLabel><Input $w={80}>0</Input></Field>
        <BtnRow>
          <Btn $w={36}>单次</Btn>
          <Btn $w={43}>正常</Btn>
          <Btn $w={40}>自动</Btn>
        </BtnRow>
      </Group>
    </Groups>
  </Scope>
)

const WinLogo = () => (
  <svg width="17" height="17" viewBox="0 0 17 17">
    <path d="M0 2.5l7-1v6.5H0zM8 1.3l9-1.3v8H8zM0 9h7v6.5l-7-1zM8 9h9v8l-9-1.3z" fill="#fff" />
  </svg>
)
const RecordLogo = () => (
  <svg width="24" height="24" viewBox="0 0 24 24">
    <circle cx="12" cy="12" r="11" fill="#f4ebe6" />
    <circle cx="12" cy="12" r="8.5" fill="none" stroke="#d2452a" strokeWidth="1.5" />
    <circle cx="12" cy="12" r="5.5" fill="#d2401f" />
  </svg>
)
const MultisimLogo = ({ size = 22 }) => (
  <svg width={size} height={size} viewBox="0 0 22 22">
    <rect width="22" height="22" rx="3" fill="#4c3f8f" />
    <path d="M2 5h7M2 10h7M3 15h5M12 4h8M12 9h8M12 14v5M16 14v5M20 14v5" stroke="#e8c070" strokeWidth="1.5" fill="none" />
    <path d="M3 19h6" stroke="#8ab8e8" strokeWidth="1.5" />
  </svg>
)
const ChromeLogo = () => (
  <svg width="22" height="22" viewBox="0 0 22 22">
    <circle cx="11" cy="11" r="11" fill="#fbc02d" />
    <path d="M11 0a11 11 0 0 1 9.5 5.5H11a5.5 5.5 0 0 0-5 3L2 3.5A11 11 0 0 1 11 0z" fill="#e53935" />
    <path d="M2 3.5l4.5 8a5.5 5.5 0 0 0 5 5L8 22A11 11 0 0 1 2 3.5z" fill="#2e9e44" />
    <circle cx="11" cy="11" r="5" fill="#fff" />
    <circle cx="11" cy="11" r="3.9" fill="#3f7fe8" />
  </svg>
)

export default function App() {
  return (
    <Root>
      <Global />
      <TitleBar>
        <MultisimLogo size={14} />
        <span>串联型稳压电源 - Multisim - [串联型稳压电源 *]</span>
        <WinControls>
          <WinButton>
            <svg width="12" height="12" viewBox="0 0 12 12"><path d="M1 6.5h10" stroke="#9a9a9a" /></svg>
          </WinButton>
          <WinButton>
            <svg width="12" height="14" viewBox="0 0 12 14"><path d="M1.5 3.5h7v10h-7zM3.5 3V.5h7v10H9" fill="none" stroke="#9a9a9a" /></svg>
          </WinButton>
          <WinButton>
            <svg width="12" height="14" viewBox="0 0 12 14"><path d="M1 1l10 12M11 1L1 13" stroke="#9a9a9a" /></svg>
          </WinButton>
        </WinControls>
      </TitleBar>

      <MenuBar>
        <Ico name="doc" />
        <MenuItems>
          {["文件(F)", "编辑(E)", "视图(V)", "绘制(P)", "MCU(M)", "仿真(S)", "转移 (n)", "工具(T)", "报告(R)", "选项(O)", "窗口(W)", "帮助(H)"].map(m => (
            <span key={m}>{m}</span>
          ))}
        </MenuItems>
        <MdiButtons>
          <MdiButton>_</MdiButton>
          <MdiButton><Ico name="restore" size={11} /></MdiButton>
          <MdiButton>X</MdiButton>
        </MdiButtons>
      </MenuBar>
      <UploadBadge>
        <UploadLogo>
          <svg width="20" height="20" viewBox="0 0 20 20" fill="none" stroke="#fff" strokeWidth="2.4">
            <circle cx="10" cy="6.5" r="3.6" />
            <circle cx="5.5" cy="13" r="3.6" />
            <circle cx="14.5" cy="13" r="3.6" />
          </svg>
        </UploadLogo>
        <UploadText>拖拽上传</UploadText>
      </UploadBadge>

      <ToolArea>
        <ToolRow>
          <Toolbar $w={280} $pl={12}>
            <Tool name="new" /><Tool name="open" /><Tool name="openBlue" /><Tool name="save" />
            <ToolSep />
            <Tool name="print" /><Tool name="preview" />
            <ToolSep />
            <Tool name="cut" /><Tool name="copy" /><Tool name="paste" />
            <ToolSep />
            <Tool name="undo" /><Tool name="redo" />
          </Toolbar>
          <Toolbar $w={484} $ml={250} $pl={11}>
            <Tool name="boxA" on /><Tool name="boxB" on /><Tool name="boxC" /><Tool name="boxD" />
            <DropCaret />
            <Tool name="calc" /><Tool name="netG" />
            <ToolSep $w={8} />
            <Tool name="pinG" /><Tool name="globeG" />
            <ListSelect>--- 在用列表 ---<Chevron /></ListSelect>
            <ToolSep $w={9} />
            <Tool name="check" /><Tool name="backG" /><Tool name="forward" />
            <DropCaret />
            <ToolSep $w={9} />
            <Tool name="search" /><Tool name="helpQ" w={22} />
          </Toolbar>
          <Toolbar $w={86} $ml={820} $pl={13} $edge>
            <ToolBtn $w={36}><Ico name="stem" size={22} /></ToolBtn>
            <ToolBtn $w={36}><Ico name="stemB" size={22} /></ToolBtn>
          </Toolbar>
        </ToolRow>
        <ToolRow>
          <Toolbar $w={470} $pl={12}>
            {["srcG", "resG", "capG", "bjtG", "diodeG", "gateA", "gateB", "adcG", "ovG", "chipG", "robotG"].map(n => <Tool key={n} name={n} />)}
            <MiscTool />
            {["blockG", "antG", "motorG", "tG", "ovalG"].map(n => <Tool key={n} name={n} />)}
            <ToolSep $w={6} />
            <Tool name="mcuG" />
            <ToolSep $w={6} />
            <Tool name="busG" /><Tool name="stepG" />
          </Toolbar>
          <Toolbar $w={299} $ml={726} $pl={10}>
            {Array.from({ length: 13 }, (_, i) => (
              <ToolBtn key={i}>
                <svg width="15" height="18" viewBox="0 0 15 18">
                  <path d="M1 2l2 1h9l2 2v10l-2 2H3l-2-2z" fill="#9c9c9c" />
                  {i === 4 && <circle cx="7.5" cy="9.5" r="1.5" fill="#fff" />}
                </svg>
              </ToolBtn>
            ))}
          </Toolbar>
        </ToolRow>
        <ToolRow>
          <Toolbar $w={233} $ml={712} $pl={12}>
            <Tool name="play" /><Tool name="pause" on /><Tool name="stop" /><Tool name="record" />
            <Tool name="stepA" /><Tool name="stepB" /><Tool name="stepC" /><Tool name="stepD" />
            <Tool name="hand" /><Tool name="handX" />
          </Toolbar>
          <Toolbar $w={124} $ml={851} $pl={9}>
            <Tool name="zoomIn" /><Tool name="zoomOut" /><Tool name="zoomArea" /><Tool name="zoomFit" /><Tool name="sheet" />
          </Toolbar>
        </ToolRow>
      </ToolArea>

      <Body>
        <LeftPanel>
          <PanelHead>
            <PanelTitle>设计工具箱</PanelTitle>
            <SmallBtn $c="#999">▴</SmallBtn>
            <SmallBtn>x</SmallBtn>
          </PanelHead>
          <PanelBox>
            <PanelTools>
              <ToolBtn><Ico name="lNew" /></ToolBtn>
              <ToolBtn $w={28}><Ico name="lOpen" /></ToolBtn>
              <ToolBtn $w={26}><Ico name="lSave" /></ToolBtn>
              <ToolBtn $w={26}><Ico name="lWin" /></ToolBtn>
              <ToolBtn $w={26}><Ico name="lTe" /></ToolBtn>
              <ToolBtn $w={50}><Ico name="lClock" /></ToolBtn>
            </PanelTools>
            <Tree>
              <TreeRow><Expander /><Ico name="clip" size={13} /><TreeText>设计1</TreeText></TreeRow>
              <TreeRow $child><Ico name="doc" /><TreeText>设计1</TreeText></TreeRow>
              <TreeRow><Expander /><Ico name="design" size={13} /><TreeText>串联型稳压电源</TreeText></TreeRow>
              <TreeRow $child><Ico name="doc" /><TreeText $sel>串联型稳压电源</TreeText></TreeRow>
            </Tree>
          </PanelBox>
          <TabRow $gap={1} $ml={2}>
            <Tab $w={42} $active>层级</Tab>
            <Tab $w={47}>可见度</Tab>
            <Tab $w={58}>项目视图</Tab>
          </TabRow>
        </LeftPanel>

        <Center>
          <Frame>
            <Canvas><Schematic /></Canvas>
            <VScroll><VArrow /><VArrow $down /></VScroll>
          </Frame>
          <TabRow $h={22} $gap={1} $ml={4} $mt={1}>
            <Tab $w={59} $th={20}><Ico name="doc" />设计1</Tab>
            <Tab $w={120} $th={20} $active><Ico name="doc" />串联型稳压电源 *</Tab>
            <NavButtons>
              <NavBtn><Ico name="navL" size={12} /></NavBtn>
              <NavBtn><Ico name="navR" size={12} /></NavBtn>
              <NavBtn><Ico name="navW" size={13} /></NavBtn>
            </NavButtons>
          </TabRow>
        </Center>

        <Strip>
          <StripTop><Ico name="stripA" size={12} /></StripTop>
          <StripBox>
            <StripRule />
            <Ico name="stripA" size={18} />
            <StripRule />
            <Ico name="stripB" size={18} />
          </StripBox>
        </Strip>
      </Body>

      <Bottom>
        <SideRail>
          <RailBtn>x</RailBtn>
          <RailBtn $c="#999">▸</RailBtn>
          <RailTitle>电子表格视图</RailTitle>
        </SideRail>
        <ResultArea>
          <ResultBox>{"Multisim  -  2020年12月11日, 19:41:06"}</ResultBox>
          <TabRow $gap={1} $mt={3}>
            <Tab $w={43} $active>结果</Tab>
            <Tab $w={41}>网络</Tab>
            <Tab $w={47}>元器件</Tab>
            <Tab $w={47}>敷铜层</Tab>
            <Tab $w={41}>仿真</Tab>
          </TabRow>
        </ResultArea>
      </Bottom>

      <StatusBar>
        <StatusCell $w={80} $center>-</StatusCell>
        <StatusCell $w={122}>串联型稳压电源: 正在仿真</StatusCell>
        <StatusCell $w={123}>传递: 0.173 s</StatusCell>
        <StatusCell $w={65}>
          <Meter>
            {[0, 0, 0, 1, 0, 0, 0].map((off, i) => <MeterBar key={i} $off={off} />)}
          </Meter>
        </StatusCell>
      </StatusBar>

      <Taskbar>
        <TaskIcon $w={48}><WinLogo /></TaskIcon>
        <TaskIcon $w={52}><RecordLogo /></TaskIcon>
        <TaskItem $w={160} $pl={11} $on $mr={5}><MultisimLogo />串联型稳压电源 - ...</TaskItem>
        <TaskItem $w={152} $pl={7}><ChromeLogo />Multisim仿真论坛-...</TaskItem>
        <Tray>
          <svg width="14" height="8" viewBox="0 0 14 8"><path d="M1 7l6-6 6 6" fill="none" stroke="#fff" /></svg>
          <svg width="17" height="15" viewBox="0 0 17 15"><path d="M.5 1.5h4v7h-4zM4.5 1.5h12v9h-16M8.5 10.5v3.5M5 14.5h7" fill="none" stroke="#fff" /></svg>
          <svg width="17" height="15" viewBox="0 0 17 15"><path d="M1 5h3l4-3.5v12L4 10H1zM11 5c1 1.5 1 3.5 0 5M13.5 3c2 3 2 6 0 9" fill="none" stroke="#fff" /></svg>
          <ImeText>中</ImeText>
          <Clock>20:07<br />2020/12/11</Clock>
        </Tray>
        <Notice>
          <svg width="17" height="40" viewBox="0 0 17 40"><path d="M1 13.5h15v11h-5l-2.5 3-2.5-3H1z" fill="none" stroke="#fff" /></svg>
        </Notice>
      </Taskbar>

      <ScopeWindow />
    </Root>
  )
}
